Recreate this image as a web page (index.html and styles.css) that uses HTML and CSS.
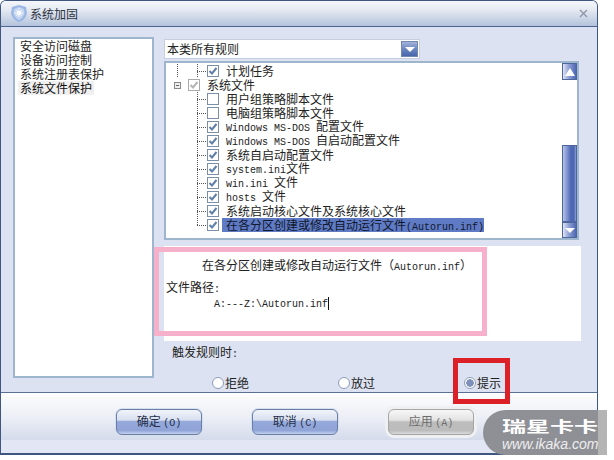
FILE: index.html
```html
<!DOCTYPE html>
<html lang="zh-CN">

<head>
    <meta charset="UTF-8">
    <title>系统加固</title>
    <link rel="stylesheet" href="styles.css">
</head>

<body>
    <div class="window">
        <div class="titlebar">
            <svg class="shield" width="16" height="17" viewBox="0 0 16 17">
                <path d="M8 0 L15 2 L16 8 C15 13 12 16 8 17 C4 16 1 13 0 8 L1 2 Z" fill="#9cb7e3" />
                <path d="M8 2 L13 4 L13.500 8 C13 11 11 13.500 8 15 C5 13.500 3 11 2.500 8 L3 4 Z" fill="#c3d5f1" />
                <circle cx="8" cy="8" r="2.500" fill="#fff" />
                <path d="M8 3 V13 M3.500 8 H12.500 M5 5 L11 11 M11 5 L5 11" stroke="#f4f8ff" stroke-width="1" stroke-dasharray="1.500 1" />
            </svg>
            <span class="title">系统加固</span>
            <svg class="close" width="9" height="9" viewBox="0 0 9 9">
                <path d="M1 1 L8 8 M8 1 L1 8" stroke="#8d97a8" stroke-width="1.400" />
            </svg>
        </div>

        <div class="body">
            <ul class="nav">
                <li>安全访问磁盘</li>
                <li>设备访问控制</li>
                <li>系统注册表保护</li>
                <li class="nav-current">系统文件保护</li>
            </ul>

            <div class="main">
                <div class="combo">
                    <span class="combo-text">本类所有规则</span>
                    <span class="combo-btn"><i class="arrow-down"></i></span>
                </div>

                <div class="tree">
                    <div class="tree-rows">
                        <div class="row"><i class="trunk"></i><i class="tee"></i><i class="check on"></i><span class="label">计划任务</span></div>
                        <div class="row"><i class="expander"></i><i class="check on grey"></i><span class="label">系统文件</span></div>
                        <div class="row"><i class="spacer"></i><i class="tee"></i><i class="check"></i><span class="label">用户组策略脚本文件</span></div>
                        <div class="row"><i class="spacer"></i><i class="tee"></i><i class="check"></i><span class="label">电脑组策略脚本文件</span></div>
                        <div class="row"><i class="spacer"></i><i class="tee"></i><i class="check on"></i><span class="label"><span class="en">Windows MS-DOS </span>配置文件</span></div>
                        <div class="row"><i class="spacer"></i><i class="tee"></i><i class="check on"></i><span class="label"><span class="en">Windows MS-DOS </span>自启动配置文件</span></div>
                        <div class="row"><i class="spacer"></i><i class="tee"></i><i class="check on"></i><span class="label">系统自启动配置文件</span></div>
                        <div class="row"><i class="spacer"></i><i class="tee"></i><i class="check on"></i><span class="label"><span class="en">system.ini</span>文件</span></div>
                        <div class="row"><i class="spacer"></i><i class="tee"></i><i class="check on"></i><span class="label"><span class="en">win.ini </span>文件</span></div>
                        <div class="row"><i class="spacer"></i><i class="tee"></i><i class="check on"></i><span class="label"><span class="en">hosts </span>文件</span></div>
                        <div class="row"><i class="spacer"></i><i class="tee"></i><i class="check on"></i><span class="label">系统启动核心文件及系统核心文件</span></div>
                        <div class="row"><i class="spacer"></i><i class="tee last"></i><i class="check on"></i><span class="label selected">在各分区创建或修改自动运行文件<span class="en">(Autorun.inf)</span></span></div>
                    </div>
                    <div class="scrollbar">
                        <div class="scroll-btn top"><i class="arrow-up"></i></div>
                        <div class="scroll-track"></div>
                        <div class="scroll-thumb"></div>
                        <div class="scroll-btn"><i class="arrow-down small"></i></div>
                    </div>
                </div>

                <div class="detail">
                    <p class="detail-title">在各分区创建或修改自动运行文件（<span class="en">Autorun.inf</span>）</p>
                    <p class="detail-label">文件路径<span class="en">:</span></p>
                    <p class="detail-path en">A:---Z:\Autorun.inf<i class="caret"></i></p>
                </div>

                <div class="trigger">触发规则时<span class="en">:</span></div>
                <div class="radios">
                    <label class="radio"><i class="dot"></i>拒绝</label>
                    <label class="radio"><i class="dot"></i>放过</label>
                    <label class="radio"><i class="dot on"></i>提示</label>
                </div>
            </div>
        </div>

        <div class="footer">
            <button class="btn">确定 <span class="en">(O)</span></button>
            <button class="btn">取消 <span class="en">(C)</span></button>
            <button class="btn disabled">应用 <span class="en">(A)</span></button>
        </div>

        <div class="mark-pink"></div>
        <div class="mark-red"></div>
    </div>

    <div class="watermark">
        <span class="wm-cn">瑞星卡卡</span>
        <span class="wm-url">www.ikaka.com</span>
    </div>
</body>

</html>
```

FILE: styles.css
```css
* {
    margin: 0;
    padding: 0;
    box-sizing: border-box;
}

body {
    width: 614px;
    height: 460px;
    position: relative;
    overflow: hidden;
    background: #fff;
    color: #222;
    font-family: "Noto Sans CJK SC", "Liberation Sans", sans-serif;
    font-size: 12px;
    line-height: 14px;
}

i {
    display: block;
    flex: none;
}

.en {
    font-family: "Liberation Mono", "DejaVu Sans Mono", monospace;
    font-size: 10px;
    white-space: pre;
}

.window {
    position: relative;
    width: 598px;
    height: 455px;
    display: flex;
    flex-direction: column;
    border: 1px solid #3f5680;
    border-radius: 6px 6px 0 0;
    border-bottom-width: 2px;
    overflow: hidden;
    background: #dce2f1;
}

.titlebar {
    height: 26px;
    flex: none;
    display: flex;
    align-items: center;
    padding: 0 10px;
    background: linear-gradient(to bottom, #f4f6fa 0%, #e6eaf2 35%, #b3c3dc 100%);
    border-bottom: 1px solid #4d6590;
}

.shield {
    margin-right: 3px;
}

.title {
    color: #2c3340;
}

.close {
    margin-left: auto;
    margin-right: -1px;
}

.body {
    flex: 1;
    min-height: 0;
    display: flex;
    align-items: flex-start;
    padding: 10px 18px 5px 12px;
    gap: 10px;
    border-bottom: 1px solid #5b7097;
}

.nav {
    width: 141px;
    height: 341px;
    flex: none;
    list-style: none;
    background: #fff;
    border: 2px solid #9db5cd;
    padding: 0 3px;
}

.nav li {
    height: 14px;
    padding: 0 2px;
    white-space: nowrap;
}

.nav .nav-current {
    width: 76px;
    background: #f0f0f0;
    color: #111;
}

.main {
    flex: 1;
    min-width: 0;
    display: flex;
    flex-direction: column;
}

.combo {
    width: 256px;
    height: 20px;
    margin-top: 2px;
    display: flex;
    align-items: center;
    justify-content: space-between;
    background: #fff;
    border: 1px solid #c5cfe0;
    padding: 0 1px 0 2px;
    flex: none;
}

.combo-text {
    line-height: 16px;
}

.combo-btn {
    width: 17px;
    height: 16px;
    display: flex;
    align-items: center;
    justify-content: center;
    background: linear-gradient(to bottom, #a3b3da 0%, #6c86c2 50%, #4766ab 100%);
    border: 1px solid #7188b3;
}

.arrow-down {
    width: 0;
    height: 0;
    border-left: 5px solid transparent;
    border-right: 5px solid transparent;
    border-top: 5px solid #fff;
}

.arrow-up {
    width: 0;
    height: 0;
    border-left: 5px solid transparent;
    border-right: 5px solid transparent;
    border-bottom: 8px solid #fff;
}

.tree {
    height: 179px;
    margin-top: 2px;
    flex: none;
    display: flex;
    background: #fff;
    border: 2px solid #9db5cd;
}

.tree-rows {
    flex: 1;
    min-width: 0;
    padding-top: 1px;
}

.row {
    height: 14px;
    display: flex;
    align-items: center;
    padding-left: 8px;
    white-space: nowrap;
}

.trunk {
    width: 23px;
    height: 14px;
    background: repeating-linear-gradient(to bottom, #555 0 1px, transparent 1px 2px) 3px 0 / 1px 100% no-repeat;
}

.spacer {
    width: 23px;
    height: 14px;
}

.tee {
    width: 10px;
    height: 14px;
    background:
        repeating-linear-gradient(to bottom, #555 0 1px, transparent 1px 2px) 0 0 / 1px 100% no-repeat,
        repeating-linear-gradient(to right, #555 0 1px, transparent 1px 2px) 0 7px / 100% 1px no-repeat;
}

.tee.last {
    background:
        repeating-linear-gradient(to bottom, #555 0 1px, transparent 1px 2px) 0 0 / 1px 8px no-repeat,
        repeating-linear-gradient(to right, #555 0 1px, transparent 1px 2px) 0 7px / 100% 1px no-repeat;
}

.expander {
    width: 7px;
    height: 7px;
    margin-right: 7px;
    border: 1px solid #888;
    background: #eee linear-gradient(#666, #666) center / 3px 1px no-repeat;
}

.check {
    width: 12px;
    height: 12px;
    margin-right: 7px;
    background: #fff center / 10px 10px no-repeat;
    border: 1px solid #7c8fa8;
}

.check.on {
    background-image: url("data:image/svg+xml,%3Csvg xmlns='http://www.w3.org/2000/svg' viewBox='0 0 10 10'%3E%3Cpath d='M1.500 5 L4 7.500 L8.500 2' fill='none' stroke='%235f7ea8' stroke-width='2'/%3E%3C/svg%3E");
}

.check.grey {
    border-color: #aaa;
    background-image: url("data:image/svg+xml,%3Csvg xmlns='http://www.w3.org/2000/svg' viewBox='0 0 10 10'%3E%3Cpath d='M1.500 5 L4 7.500 L8.500 2' fill='none' stroke='%23b5b5b5' stroke-width='2'/%3E%3C/svg%3E");
}

.label.selected {
    display: inline-block;
    height: 14px;
    margin-left: -4px;
    padding-left: 4px;
    background: #5f7bc6;
    color: #10182c;
}

.scrollbar {
    width: 15px;
    flex: none;
    display: flex;
    flex-direction: column;
}

.scroll-btn {
    height: 16px;
    flex: none;
    display: flex;
    align-items: center;
    justify-content: center;
    border: 1px solid #4d669b;
    background: linear-gradient(to right, #dfe4f3 0%, #8f9fd3 45%, #4f68b4 100%);
}

.scroll-btn.top {
    height: 17px;
}

.scroll-track {
    height: 65px;
    flex: none;
}

.scroll-thumb {
    height: 77px;
    flex: none;
    border: 1px solid #4d669b;
    background: linear-gradient(to right, #b7c2e4 0%, #7b8fcf 35%, #4f68b4 60%, #4f68b4 85%, #8ea0d6 100%);
}

.detail {
    width: 417px;
    height: 95px;
    margin-top: 6px;
    flex: none;
    background: #fff;
    padding-top: 10px;
}

.detail-title {
    padding-left: 38px;
    height: 18px;
    line-height: 18px;
}

.detail-label {
    margin-top: 6px;
    padding-left: 2px;
}

.detail-path {
    padding-left: 50px;
    line-height: 13px;
}

.caret {
    display: inline-block;
    width: 1px;
    height: 13px;
    background: #111;
    vertical-align: -3px;
}

.trigger {
    padding-left: 8px;
    margin-top: 4px;
}

.radios {
    margin-top: 14px;
    display: flex;
    padding-left: 48px;
    gap: 89px;
}

.radio {
    display: flex;
    align-items: center;
    gap: 1px;
}

.dot {
    width: 12px;
    height: 12px;
    border-radius: 50%;
    border: 1px solid #8c9cb8;
    background: #fff;
}

.dot.on {
    background: radial-gradient(circle, #7f8fbc 0 3.500px, #fff 4px);
}

.footer {
    height: 60px;
    flex: none;
    display: flex;
    align-items: flex-start;
    padding: 16px 0 0 115px;
    gap: 50px;
    background: linear-gradient(to bottom, #fdfdfe 0%, #eceff6 40%, #d4dbeb 78%, #e2e6f5 78%, #e2e6f5 100%);
}

.btn {
    width: 86px;
    height: 26px;
    border: 1px solid #6a7fa6;
    border-radius: 6px;
    font: inherit;
    color: #24304a;
    box-shadow: 0 0 0 1px #d5dff0;
    background: linear-gradient(to bottom, #f2f4fa 0%, #d8dff0 42%, #95a9db 48%, #8fa3d8 85%, #c4d0ec 100%);
}

.btn.disabled {
    color: #6d6d6d;
    border-color: #a5a5a5;
    box-shadow: 0 0 0 3px #eef0f2;
    background: linear-gradient(to bottom, #f7f7f7 0%, #e3e3e3 42%, #bdbdbd 50%, #bcbcbc 85%, #dadada 100%);
}

/* annotations drawn on top of the screenshot */
.mark-pink {
    position: absolute;
    left: 153px;
    top: 246px;
    width: 333px;
    height: 89px;
    border: 5px solid #f7b0ca;
}

.mark-red {
    position: absolute;
    left: 452px;
    top: 357px;
    width: 57px;
    height: 46px;
    border: 5px solid #dc2028;
}

.watermark {
    position: absolute;
    left: 483px;
    top: 410px;
    width: 124px;
    height: 45px;
    border-radius: 23px 0 0 23px;
    background: linear-gradient(to right, #8e9096 0, #8e9096 93%, #b4b4b4 93%);
    color: #fff;
    padding: 8px 0 0 19px;
    overflow: hidden;
}

.wm-cn {
    display: block;
    width: 60px;
    font-size: 15px;
    line-height: 16px;
    font-weight: 700;
    white-space: nowrap;
    transform: scaleX(1.6);
    transform-origin: left center;
}

.wm-url {
    display: block;
    margin-top: 3px;
    font-family: "Liberation Sans", sans-serif;
    font-size: 14px;
    line-height: 14px;
    font-style: italic;
    color: #eee;
    white-space: nowrap;
}
```
